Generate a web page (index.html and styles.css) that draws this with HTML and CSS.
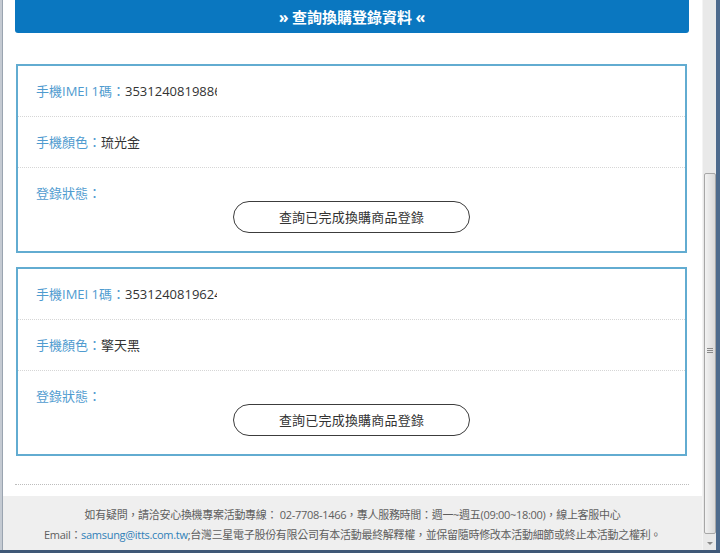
FILE: index.html
```html
<!DOCTYPE html>
<html lang="zh-Hant">
<head>
<meta charset="utf-8">
<title>查詢換購登錄資料</title>
<link rel="stylesheet" href="styles.css">
</head>
<body>
<div class="window">
  <div class="main">
    <div class="frame-l"></div>
    <div class="viewport">
      <div class="content">
        <div class="title"><span class="q">»</span> 查詢換購登錄資料 <span class="q">«</span></div>
        <div class="card">
          <div class="row"><span class="label">手機IMEI 1碼：</span><span class="value">353124081988<span class="cut">6</span></span></div>
          <div class="row"><span class="label">手機顏色：</span><span class="value">琉光金</span></div>
          <div class="row last">
            <div class="label">登錄狀態：</div>
            <div class="btn">查詢已完成換購商品登錄</div>
          </div>
        </div>
        <div class="card">
          <div class="row"><span class="label">手機IMEI 1碼：</span><span class="value">353124081962<span class="cut">4</span></span></div>
          <div class="row"><span class="label">手機顏色：</span><span class="value">擎天黑</span></div>
          <div class="row last">
            <div class="label">登錄狀態：</div>
            <div class="btn">查詢已完成換購商品登錄</div>
          </div>
        </div>
        <div class="dots"></div>
      </div>
      <div class="footer">
        <div class="fline">如有疑問，請洽安心換機專案活動專線： 02-7708-1466，專人服務時間：週一~週五(09:00~18:00)，線上客服中心</div>
        <div class="fline">Email：<span class="mail">samsung@itts.com.tw</span>;台灣三星電子股份有限公司有本活動最終解釋權，並保留隨時修改本活動細節或終止本活動之權利。</div>
      </div>
    </div>
    <div class="scrollbar">
      <div class="track-top"></div>
      <div class="thumb"><div class="grip"></div></div>
      <div class="arrow-down"></div>
    </div>
    <div class="frame-r"></div>
  </div>
  <div class="frame-b"></div>
</div>
</body>
</html>
```

FILE: styles.css
```css
html, body {
  margin: 0;
  padding: 0;
  width: 720px;
  height: 553px;
  overflow: hidden;
  background: #ffffff;
}

body {
  font-family: "Open Sans", "Noto Sans CJK TC", sans-serif;
  color: #333333;
}

.window {
  display: flex;
  flex-direction: column;
  width: 720px;
  height: 553px;
}

.main {
  display: flex;
  height: 550px;
}

.frame-l {
  width: 2px;
  background: #c4cad2;
  border-right: 1px solid #9aa4b0;
}

.frame-r {
  width: 4px;
  background: #4d6a8c;
}

.frame-b {
  height: 3px;
  background: #3f5877;
}

.viewport {
  flex: 1;
  display: flex;
  flex-direction: column;
  background: #ffffff;
}

.content {
  padding: 0 13px 11px 12px;
}

.title {
  height: 33px;
  line-height: 33px;
  background: #0a77c0;
  border-radius: 0 0 3px 3px;
  color: #ffffff;
  font-family: "Noto Sans CJK TC", sans-serif;
  font-weight: 700;
  font-size: 15px;
  text-align: center;
}

.title .q {
  font-family: "Open Sans", sans-serif;
  font-size: 16px;
}

.card {
  margin: 31px 2px 0 1px;
  border: 2px solid #62acd1;
}

.card + .card {
  margin-top: 14px;
}

.row {
  padding: 16px 18px;
  line-height: 18px;
  font-size: 13px;
  border-bottom: 1px dotted #d6d6d6;
}

.row.last {
  border-bottom: none;
  padding-bottom: 18px;
}

.label {
  color: #4f9bcf;
  font-family: "Open Sans", "Noto Sans CJK TC", sans-serif;
}

.value {
  color: #333333;
}

.cut {
  display: inline-block;
  width: 3px;
  overflow: hidden;
  vertical-align: top;
}

.btn {
  width: 235px;
  height: 30px;
  line-height: 30px;
  margin: -1px auto 0;
  border: 1px solid #3c3c3c;
  border-radius: 16px;
  text-align: center;
  font-size: 13px;
  color: #333333;
  font-family: "Noto Sans CJK TC", sans-serif;
  letter-spacing: 0.2px;
}

.dots {
  margin-top: 28px;
  border-top: 1px dotted #bdbdbd;
}

.footer {
  flex: 1;
  background: #efefef;
  padding: 9px 0 5px;
  text-align: center;
  font-size: 11px;
  color: #5e5e5e;
  letter-spacing: -0.3px;
}

.fline {
  line-height: 20px;
  white-space: nowrap;
}

.mail {
  color: #2f7fb8;
}

.scrollbar {
  width: 13px;
  background: #e9e9e9;
  border-left: 1px solid #f4f4f4;
  display: flex;
  flex-direction: column;
  align-items: center;
}

.track-top {
  height: 173px;
}

.thumb {
  width: 10px;
  height: 359px;
  border: 1px solid #a7a7a7;
  border-radius: 2px;
  background: linear-gradient(to right, #f2f2f2, #d9d9d9);
  display: flex;
  align-items: center;
  justify-content: center;
}

.grip {
  width: 6px;
  height: 5px;
  background: repeating-linear-gradient(to bottom, #8a8a8a 0, #8a8a8a 1px, transparent 1px, transparent 2px);
  margin-top: -6px;
}

.arrow-down {
  margin-top: 8px;
  width: 0;
  height: 0;
  border-left: 3px solid transparent;
  border-right: 3px solid transparent;
  border-top: 3px solid #8a8a8a;
}
```
